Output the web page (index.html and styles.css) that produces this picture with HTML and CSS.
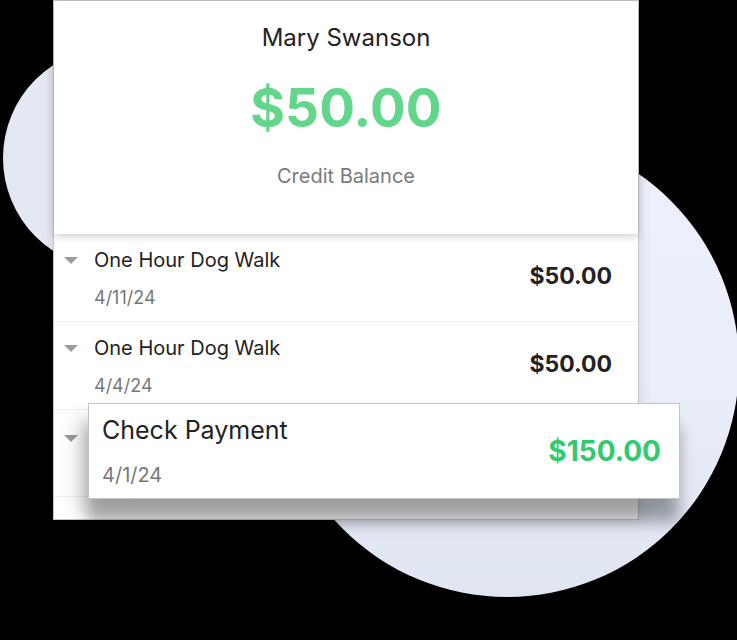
FILE: index.html
```html
<!DOCTYPE html>
<html lang="en">
<head>
<meta charset="utf-8">
<title>Credit Balance</title>
<link rel="stylesheet" href="styles.css">
</head>
<body>
<div class="stage">
  <div class="blob blob-left"></div>
  <div class="blob blob-right"></div>

  <div class="card">
    <div class="summary">
      <div class="client-name">Mary Swanson</div>
      <div class="balance">$50.00</div>
      <div class="balance-label">Credit Balance</div>
    </div>

    <div class="row">
      <div class="row-main">
        <div class="row-title"><span class="caret"></span>One Hour Dog Walk</div>
        <div class="row-date">4/11/24</div>
      </div>
      <div class="row-amount">$50.00</div>
    </div>

    <div class="row">
      <div class="row-main">
        <div class="row-title"><span class="caret"></span>One Hour Dog Walk</div>
        <div class="row-date">4/4/24</div>
      </div>
      <div class="row-amount">$50.00</div>
    </div>

    <div class="row row-covered">
      <span class="caret"></span>
    </div>

    <div class="row-tail"></div>

    <div class="popout">
      <div class="popout-main">
        <div class="popout-title">Check Payment</div>
        <div class="popout-date">4/1/24</div>
      </div>
      <div class="popout-amount">$150.00</div>
    </div>
  </div>
</div>
</body>
</html>
```

FILE: styles.css
```css
* {
  box-sizing: border-box;
}

html, body {
  margin: 0;
  padding: 0;
  background: #000;
}

body {
  font-family: "Inter", "Roboto", "Liberation Sans", sans-serif;
  color: #222;
}

.stage {
  position: relative;
  width: 737px;
  height: 640px;
  overflow: hidden;
}

.blob {
  position: absolute;
  border-radius: 50%;
}

.blob-left {
  left: 3px;
  top: 47px;
  width: 222px;
  height: 222px;
  background: linear-gradient(90deg, #e2e7f2 0%, #e9eefa 45%, #ebf0fb 100%);
}

.blob-right {
  left: 275px;
  top: 133px;
  width: 464px;
  height: 464px;
  background: linear-gradient(180deg, #ecf1fd 0%, #e9eefa 55%, #dfe5f1 100%);
}

.card {
  position: relative;
  margin-left: 53px;
  width: 586px;
  background: #fff;
  border: 1px solid #c6c6c6;
  box-shadow: 0 0 12px rgba(0, 0, 0, 0.12);
}

.summary {
  position: relative;
  z-index: 1;
  background: #fff;
  text-align: center;
  padding: 22px 0 46px;
  box-shadow: 0 2px 8px rgba(0, 0, 0, 0.2);
}

.client-name {
  font-size: 24px;
  line-height: 29px;
  color: #222;
}

.balance {
  margin-top: 25px;
  font-size: 53px;
  line-height: 63px;
  font-weight: 700;
  color: #62d68b;
  letter-spacing: 0.2px;
}

.balance-label {
  margin-top: 24px;
  font-size: 20px;
  line-height: 24px;
  color: #7a7a7a;
}

.row {
  display: flex;
  align-items: center;
  justify-content: space-between;
  padding: 14px 26px 12px 10px;
  border-bottom: 1px solid #eeeeee;
}

.row-covered {
  height: 87px;
  align-items: flex-start;
  padding-top: 24px;
}

.row-main {
  display: flex;
  flex-direction: column;
}

.row-title {
  display: flex;
  align-items: center;
  font-size: 20px;
  line-height: 24px;
  color: #222;
}

.caret {
  width: 0;
  height: 0;
  margin-right: 16px;
  margin-top: 1px;
  border-left: 7px solid transparent;
  border-right: 7px solid transparent;
  border-top: 7px solid #9b9b9b;
}

.row-date {
  margin-top: 15px;
  padding-left: 30px;
  font-size: 18px;
  line-height: 22px;
  color: #777;
}

.row-amount {
  margin-top: -5px;
  font-size: 23px;
  line-height: 27px;
  font-weight: 700;
  color: #222;
}

.row-tail {
  height: 22px;
}

.popout {
  position: absolute;
  z-index: 2;
  left: 34px;
  top: 402px;
  width: 592px;
  height: 96px;
  display: flex;
  align-items: center;
  justify-content: space-between;
  padding: 0 18px 0 13px;
  background: #fff;
  border: 1px solid #c4c4c4;
  box-shadow: 0 24px 14px 0 rgba(0, 0, 0, 0.27), -10px 14px 18px rgba(0, 0, 0, 0.16);
}

.popout-main {
  display: flex;
  flex-direction: column;
}

.popout-title {
  font-size: 25px;
  line-height: 30px;
  color: #222;
}

.popout-date {
  margin-top: 18px;
  font-size: 20px;
  line-height: 24px;
  color: #777;
}

.popout-amount {
  font-size: 28px;
  line-height: 32px;
  font-weight: 700;
  color: #2fcb6e;
}
```
